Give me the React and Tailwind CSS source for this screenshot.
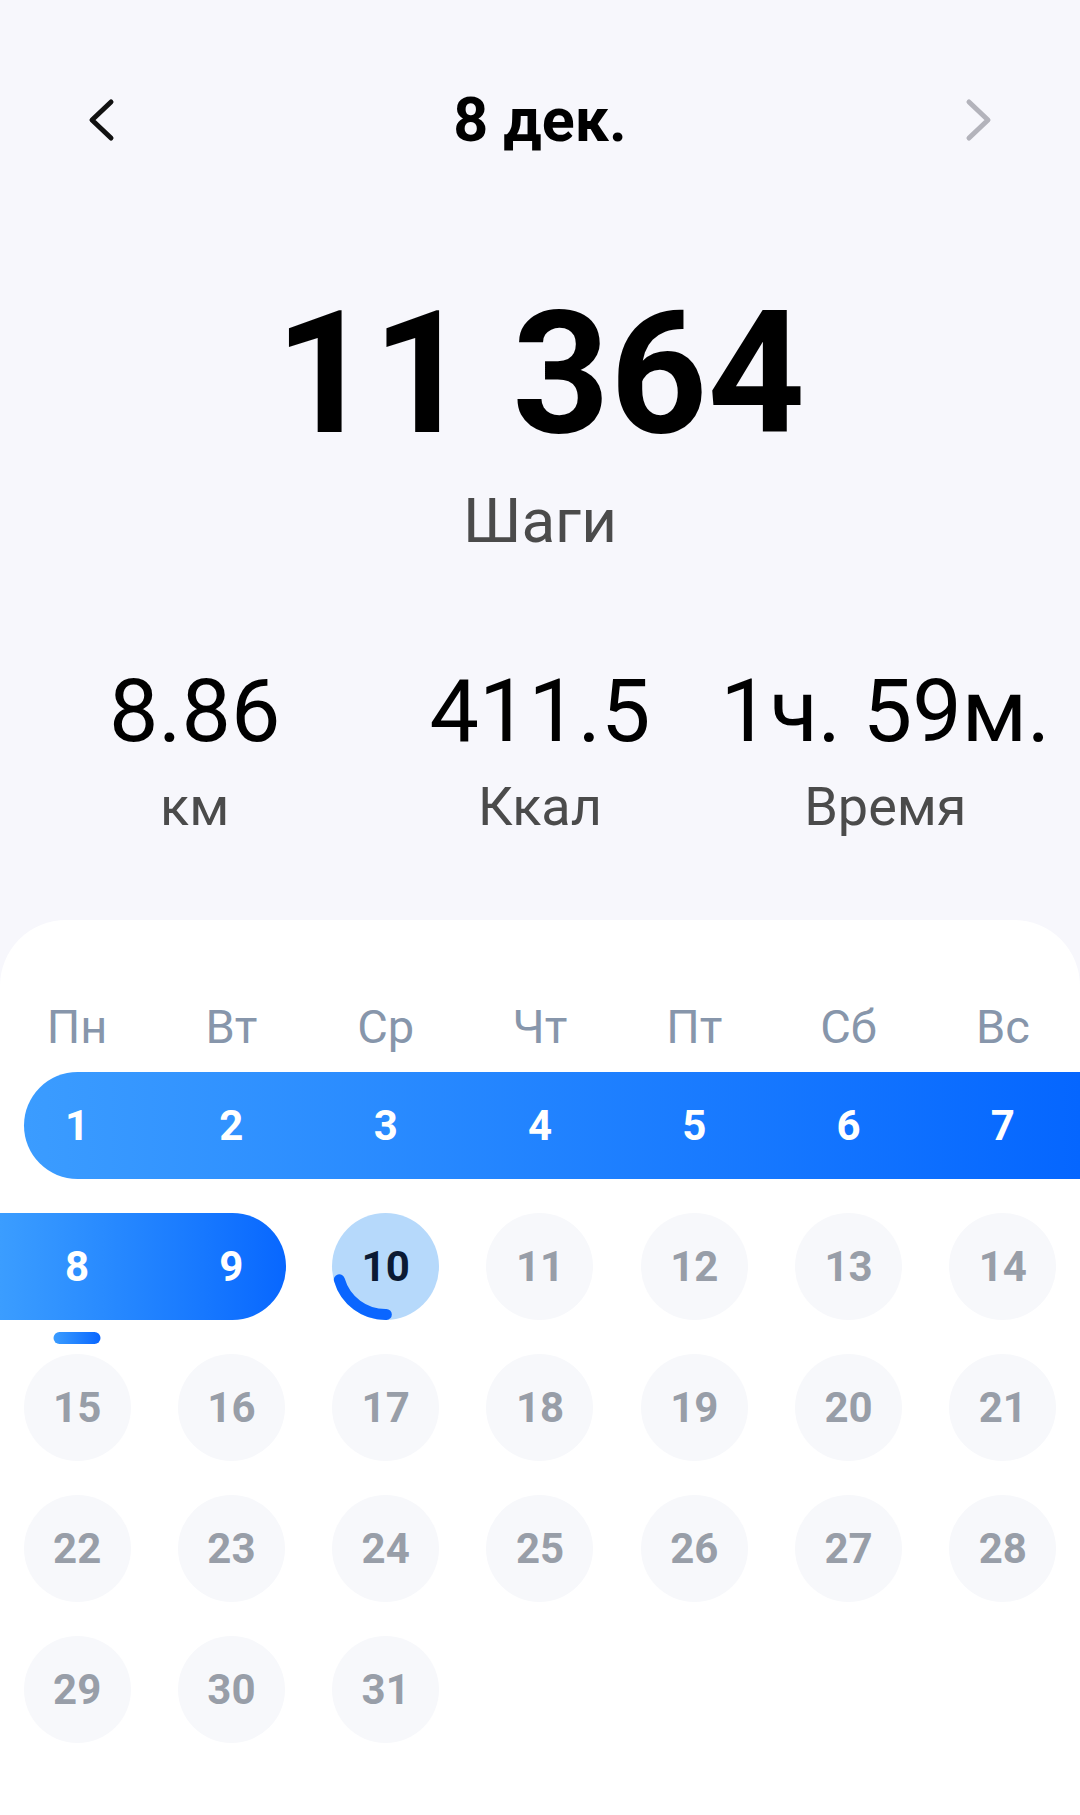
import React from "react";

const COLS = [
    "col-start-1",
    "col-start-2",
    "col-start-3",
    "col-start-4",
    "col-start-5",
    "col-start-6",
    "col-start-7",
];

const WEEKDAYS = ["Пн", "Вт", "Ср", "Чт", "Пт", "Сб", "Вс"];

const WEEKS = [
    [1, 2, 3, 4, 5, 6, 7],
    [8, 9, 10, 11, 12, 13, 14],
    [15, 16, 17, 18, 19, 20, 21],
    [22, 23, 24, 25, 26, 27, 28],
    [29, 30, 31],
];

const DONE = [1, 2, 3, 4, 5, 6, 7, 8, 9];
const TODAY = 10;

function Chevron({ dir, color }) {
    const d = dir === "left" ? "M25 4 L6 22 L25 40" : "M7 4 L26 22 L7 40";
    return (
        <svg width="32" height="44" viewBox="0 0 32 44" fill="none">
            <path d={d} stroke={color} strokeWidth="5" strokeLinecap="round" strokeLinejoin="round" />
        </svg>
    );
}

function Stat({ value, label }) {
    return (
        <div className="flex flex-col items-center">
            <div className="text-[88px] leading-[88px] text-black whitespace-nowrap">{value}</div>
            <div className="mt-[25px] text-[54px] leading-[54px] text-[#4b4b4b] whitespace-nowrap">{label}</div>
        </div>
    );
}

function TodayCircle({ day }) {
    return (
        <div className="relative w-[107px] h-[107px] rounded-full bg-[#b6d9fb] flex items-center justify-center">
            <svg className="absolute inset-0" width="107" height="107" viewBox="0 0 107 107" fill="none">
                <path
                    d="M54.34 101.49 A48 48 0 0 1 7.36 66.73"
                    stroke="#0a66ff"
                    strokeWidth="11"
                    strokeLinecap="round"
                />
            </svg>
            <span className="relative text-[42px] font-bold text-[#0b1a33]">{day}</span>
        </div>
    );
}

function Week({ days }) {
    const doneInWeek = days.filter((d) => DONE.includes(d));
    const full = doneInWeek.length === 7;

    return (
        <div className="grid grid-cols-7 h-[107px]">
            {/* Streak band */}
            {full && (
                <div className="row-start-1 col-start-1 col-end-8 ml-[24px] rounded-l-full rounded-r-[13px] bg-linear-to-r from-[#3b9cff] to-[#0566ff]"></div>
            )}
            {!full && doneInWeek.length > 0 && (
                <div className="row-start-1 col-start-1 col-end-3 mr-[23px] rounded-l-[13px] rounded-r-full bg-linear-to-r from-[#3b9dff] to-[#0867ff]"></div>
            )}

            {days.map((day, i) => {
                const done = DONE.includes(day);
                return (
                    <div key={day} className={`${COLS[i]} row-start-1 relative flex items-center justify-center`}>
                        {done && (
                            <span className="text-[42px] font-bold text-white">{day}</span>
                        )}
                        {day === TODAY && <TodayCircle day={day} />}
                        {!done && day !== TODAY && (
                            <div className="w-[107px] h-[107px] rounded-full bg-[#f7f8fb] flex items-center justify-center">
                                <span className="text-[42px] font-bold text-[#989ea8]">{day}</span>
                            </div>
                        )}

                        {/* selected day marker */}
                        {day === 8 && (
                            <div className="absolute top-[119px] left-1/2 -translate-x-1/2 w-[47px] h-[12px] rounded-full bg-linear-to-r from-[#3b9cff] to-[#0a66ff]"></div>
                        )}
                    </div>
                );
            })}
        </div>
    );
}

export default function App() {
    return (
        <div className="w-[1080px] h-[1815px] bg-[#f7f7fc] flex flex-col font-['Roboto','Noto_Sans',sans-serif] overflow-hidden">

            {/* Header */}
            <div className="h-[240px] flex items-center px-[86px]">
                <Chevron dir="left" color="#111111" />
                <h1 className="flex-1 text-center text-[61px] leading-[61px] font-bold text-black">8 дек.</h1>
                <Chevron dir="right" color="#b3b3bb" />
            </div>

            {/* Steps */}
            <div className="mt-[49px] text-center text-[170px] leading-[170px] font-bold text-black">11 364</div>
            <div className="mt-[31px] text-center text-[62px] leading-[62px] text-[#4b4b4b]">Шаги</div>

            {/* Stats */}
            <div className="mt-[115px] grid grid-cols-3 px-[22px]">
                <Stat value="8.86" label="км" />
                <Stat value="411.5" label="Ккал" />
                <Stat value="1ч. 59м." label="Время" />
            </div>

            {/* Calendar */}
            <div className="mt-[86px] flex-1 bg-white rounded-t-[66px] pt-[83px]">
                <div className="grid grid-cols-7">
                    {WEEKDAYS.map((w) => (
                        <div key={w} className="text-center text-[47px] leading-[47px] text-[#8796ab]">{w}</div>
                    ))}
                </div>

                <div className="mt-[22px] flex flex-col gap-[34px]">
                    {WEEKS.map((days, i) => (
                        <Week key={i} days={days} />
                    ))}
                </div>
            </div>
        </div>
    );
}
